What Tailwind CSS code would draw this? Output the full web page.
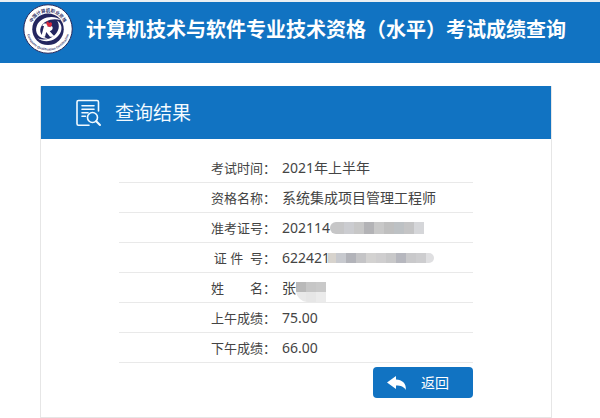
<!DOCTYPE html>
<html lang="zh-CN">
  <head>
    <meta charset="UTF-8" />
    <meta name="viewport" content="width=device-width, initial-scale=1.0" />
    <title>考试成绩查询</title>
    <script src="https://cdn.jsdelivr.net/npm/@tailwindcss/browser@4"></script>
  </head>
  <body class="bg-white font-['Noto_Sans','Noto_Sans_CJK_SC',sans-serif] text-[#444]">
    <!-- Top banner -->
    <header class="flex items-start gap-[13px] border-t-2 border-[#eaeff3] bg-[#1173c2] pt-0.5 pb-[9px] pl-[23px]">
      <svg class="size-[50px] shrink-0" viewBox="0 0 200 200" aria-hidden="true">
        <defs>
          <path id="ringTop" d="M32 100 A68 68 0 0 1 168 100" />
          <path id="ringBottom" d="M14 100 A86 86 0 0 0 186 100" />
        </defs>
        <circle cx="100" cy="100" r="97" fill="#fff" stroke="#27295c" stroke-width="4" />
        <circle cx="100" cy="101" r="63" fill="#23265f" />
        <text font-size="18" font-weight="700" fill="#34366b" font-family="Noto Sans CJK SC, sans-serif">
          <textPath href="#ringTop" startOffset="50%" text-anchor="middle">中国计算机职业资格</textPath>
        </text>
        <text font-size="13" font-weight="700" fill="#34366b" font-family="Liberation Sans, sans-serif">
          <textPath href="#ringBottom" startOffset="50%" text-anchor="middle">Computer Qualification Certification</textPath>
        </text>
        <path d="M151 65 C126 42 69 50 55 88 C44 117 67 143 101 139 C78 133 63 115 71 94 C81 66 121 54 151 65Z" fill="#fff" />
        <path d="M57 137 C92 162 139 145 152 109 C158 90 150 74 137 67 C149 88 143 109 126 125 C108 142 82 146 57 137Z" fill="#fff" />
        <path d="M82 78 H102 L98 91 Q119 83 119 96 Q119 105 107 109 L127 131 H108 L93 112 L88 131 H73 L84 88 H77Z" fill="#fff" />
        <path d="M95 71 q8-4 9 6 q7-9 12 1 q2 7-7 15 q-12-3-14-10 q-3-6 0-12Z" fill="#d9283d" />
      </svg>
      <h1 class="pt-3 text-xl leading-7 font-bold whitespace-nowrap text-white">计算机技术与软件专业技术资格（水平）考试成绩查询</h1>
    </header>

    <!-- Result card -->
    <main class="mt-[23px] mr-12 ml-10 border border-t-0 border-[#e6e6e6]">
      <div class="flex h-[53px] items-center gap-3 bg-[#1173c2] pl-[34px] text-[#f2faff]">
        <svg class="size-7 shrink-0" viewBox="0 0 28 28" fill="none" stroke="currentColor" stroke-width="1.6" stroke-linecap="round" stroke-linejoin="round" aria-hidden="true">
          <path d="M14 26.2H3.5Q2 26.2 2 24.7V3Q2 1.5 3.5 1.5H22Q23.5 1.5 23.5 3V12" />
          <path d="M7 6.7H19M7 10.2H19M7 13.7H13M7 17.2H10.5" />
          <circle cx="17.5" cy="18.5" r="5" />
          <path d="M21.2 22.2L25 26" stroke-width="2" />
        </svg>
        <h2 class="text-[19px] leading-7">查询结果</h2>
      </div>

      <div class="px-[78px] pt-[14px] pb-[19px]">
        <table class="w-full border-separate border-spacing-0 text-left text-sm leading-5">
          <tbody>
            <tr>
              <th scope="row" class="h-[30px] w-[157px] border-b border-[#e9e9e9] p-0 text-right text-[13px] font-normal">考试时间：</th>
              <td class="border-b border-[#e9e9e9] p-0 pl-1.5">2021年上半年</td>
            </tr>
            <tr>
              <th scope="row" class="h-[30px] border-b border-[#e9e9e9] p-0 text-right text-[13px] font-normal">资格名称：</th>
              <td class="border-b border-[#e9e9e9] p-0 pl-1.5">系统集成项目管理工程师</td>
            </tr>
            <tr>
              <th scope="row" class="h-[30px] border-b border-[#e9e9e9] p-0 text-right text-[13px] font-normal">准考证号：</th>
              <td class="border-b border-[#e9e9e9] p-0 pl-1.5">
                <div class="flex items-center">
                  202114
                  <span class="flex h-3 overflow-hidden rounded-l-md" aria-hidden="true">
                    <i class="w-3.5 bg-[#c6c6c7]"></i><i class="w-2.5 bg-[#cbccd0]"></i><i class="w-2.5 bg-[#c7c7c7]"></i><i class="w-2.5 bg-[#b3b3b6]"></i><i class="w-2.5 bg-[#c8c8c8]"></i><i class="w-2.5 bg-[#bfbfbf]"></i><i class="w-2.5 bg-[#bdc1c4]"></i><i class="w-2.5 bg-[#c4c4c5]"></i><i class="w-2.5 bg-[#d5d6d9]"></i>
                  </span>
                </div>
              </td>
            </tr>
            <tr>
              <th scope="row" class="h-[30px] border-b border-[#e9e9e9] p-0 text-right text-[13px] font-normal">证&nbsp;件&nbsp;&nbsp;号：</th>
              <td class="border-b border-[#e9e9e9] p-0 pl-1.5">
                <div class="flex items-center">
                  622421
                  <span class="-ml-0.5 flex h-2.5 overflow-hidden rounded-r-md" aria-hidden="true">
                    <i class="w-2 bg-[#d7d3cd]"></i><i class="w-2.5 bg-[#c7c9ce]"></i><i class="w-2.5 bg-[#b2b3b9]"></i><i class="w-2.5 bg-[#c4c4c6]"></i><i class="w-2.5 bg-[#d3d2d1]"></i><i class="w-2.5 bg-[#cfcecf]"></i><i class="w-2.5 bg-[#c8c8c9]"></i><i class="w-2.5 bg-[#b6b7be]"></i><i class="w-2.5 bg-[#c9c9cb]"></i><i class="w-2.5 bg-[#cdcdcf]"></i><i class="w-2 bg-[#dfdfe1]"></i>
                  </span>
                </div>
              </td>
            </tr>
            <tr>
              <th scope="row" class="h-[30px] border-b border-[#e9e9e9] p-0 text-right text-[13px] font-normal">姓　　名：</th>
              <td class="border-b border-[#e9e9e9] p-0 pl-1.5">
                <div class="flex items-center">
                  张
                  <span class="mt-2 grid h-5 grid-cols-[10px_10px_10px] overflow-hidden rounded-bl-xl" aria-hidden="true">
                    <i class="bg-[#b9b9b9]"></i><i class="bg-[#c6c6c6]"></i><i class="bg-[#c9c9c9]"></i>
                    <i class="bg-[#e9e9e9]"></i><i class="bg-[#e6e6e6]"></i><i class="bg-[#ebebeb]"></i>
                  </span>
                </div>
              </td>
            </tr>
            <tr>
              <th scope="row" class="h-[30px] border-b border-[#e9e9e9] p-0 text-right text-[13px] font-normal">上午成绩：</th>
              <td class="border-b border-[#e9e9e9] p-0 pl-1.5">75.00</td>
            </tr>
            <tr>
              <th scope="row" class="h-[30px] border-b border-[#e9e9e9] p-0 text-right text-[13px] font-normal">下午成绩：</th>
              <td class="border-b border-[#e9e9e9] p-0 pl-1.5">66.00</td>
            </tr>
          </tbody>
        </table>

        <button type="button" class="mt-1 ml-auto flex h-[31px] w-[100px] items-center gap-3.5 rounded bg-[#1173c2] pl-3.5 text-sm text-white">
          <svg class="h-4 w-5" viewBox="0 0 20 16" fill="currentColor" aria-hidden="true">
            <path d="M0 7.5L9 1V4.6C15 4.8 19.5 8.5 18.8 15C17 11.7 14 10.5 9 10.5V14Z" />
          </svg>
          返回
        </button>
      </div>
    </main>
  </body>
</html>
